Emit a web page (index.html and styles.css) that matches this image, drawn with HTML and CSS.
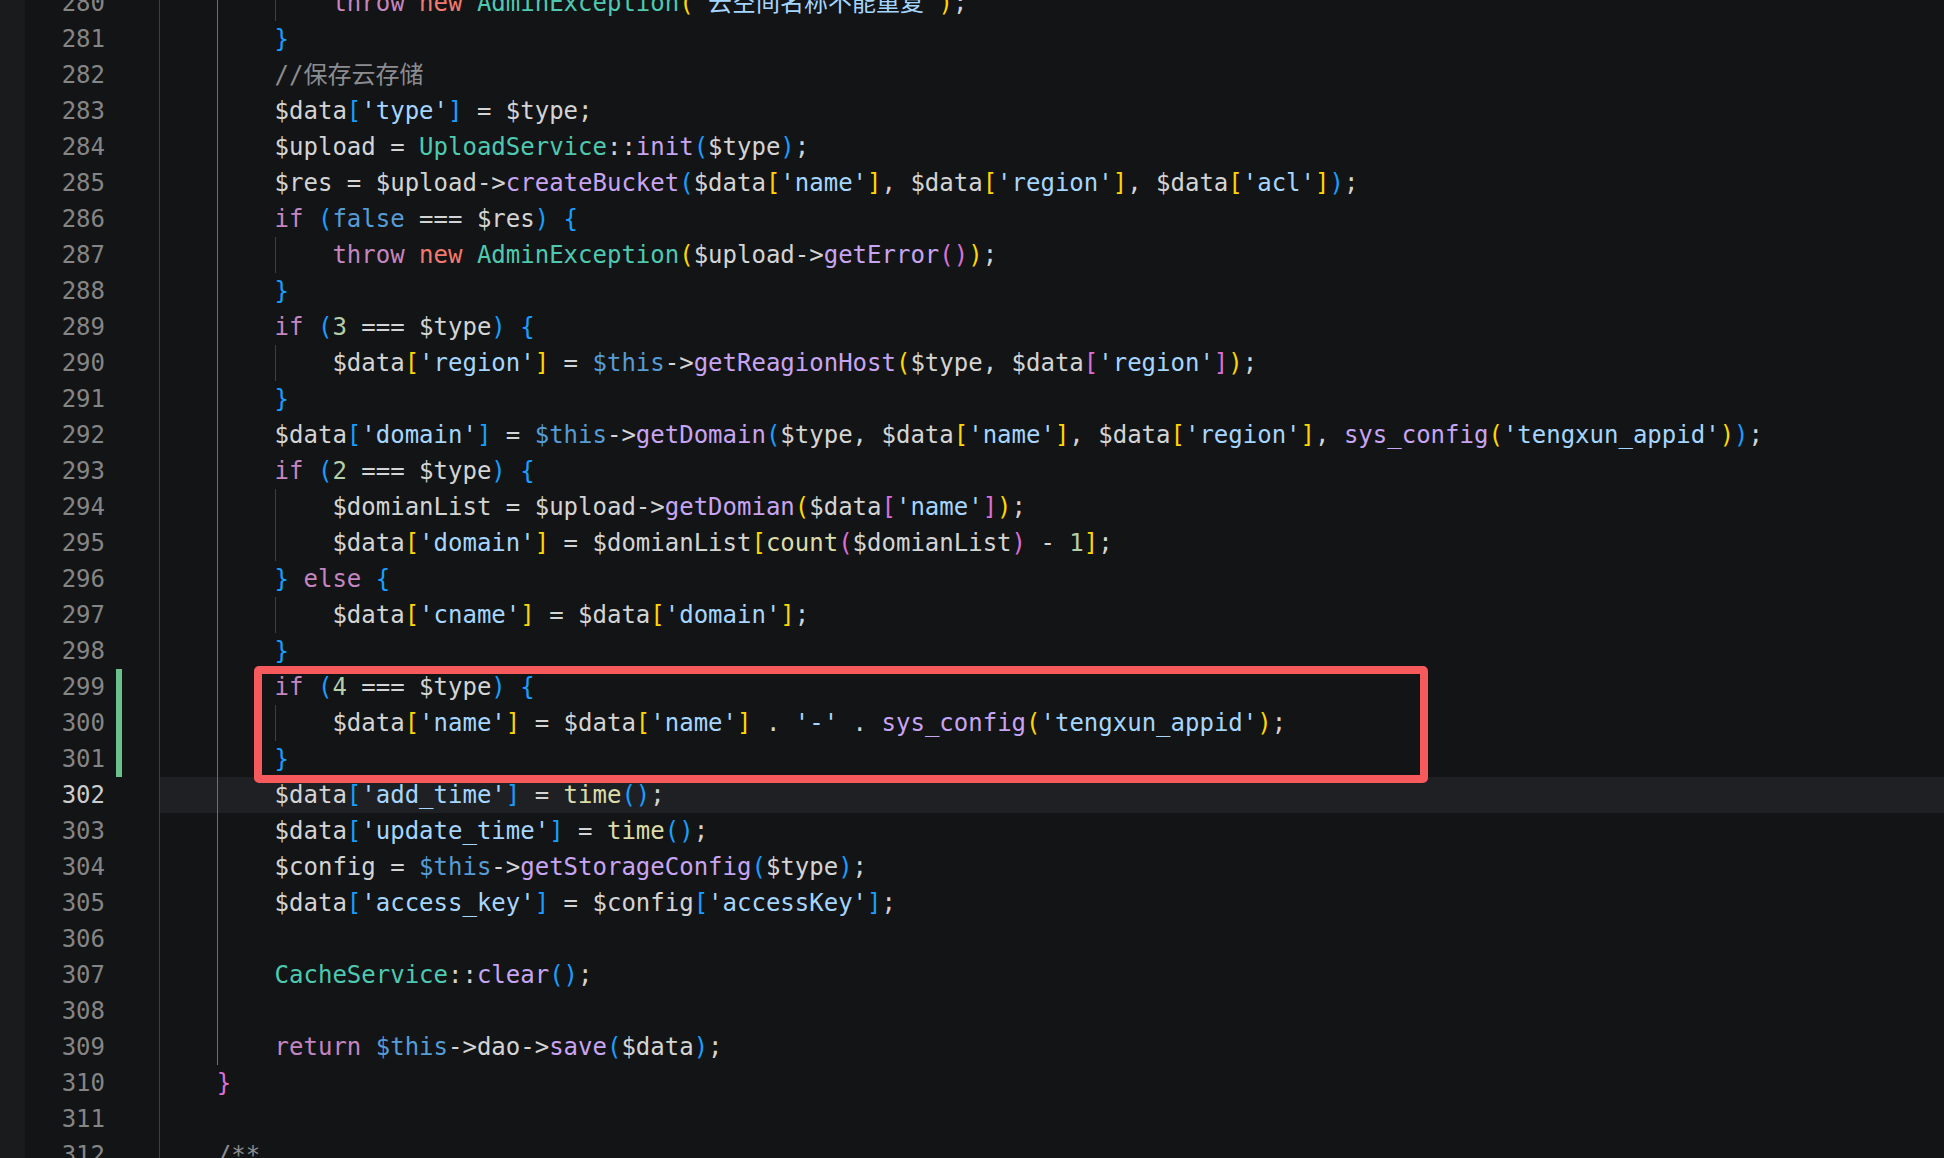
FILE: index.html
```html
<!DOCTYPE html>
<html lang="zh-CN">
<head>
<meta charset="utf-8">
<title>editor</title>
<link rel="stylesheet" href="styles.css">
</head>
<body>
<div class="editor">
  <div class="strip"></div>
  <div class="lines">
    <div class="row"><span class="ln">280</span><span class="mk"></span><div class="code"><span class="g"></span><span class="g ga"></span><span class="g"></span><span class="k">throw</span> <span class="n">new</span> <span class="c">AdminException</span><span class="y">(</span><span class="s">'云空间名称不能重复'</span><span class="y">)</span>;</div></div>
    <div class="row"><span class="ln">281</span><span class="mk"></span><div class="code"><span class="g"></span><span class="g ga"></span><span class="bl">}</span></div></div>
    <div class="row"><span class="ln">282</span><span class="mk"></span><div class="code"><span class="g"></span><span class="g ga"></span><span class="cm">//保存云存储</span></div></div>
    <div class="row"><span class="ln">283</span><span class="mk"></span><div class="code"><span class="g"></span><span class="g ga"></span>$data<span class="bl">[</span><span class="s">'type'</span><span class="bl">]</span> = $type;</div></div>
    <div class="row"><span class="ln">284</span><span class="mk"></span><div class="code"><span class="g"></span><span class="g ga"></span>$upload = <span class="c">UploadService</span>::<span class="f">init</span><span class="bl">(</span>$type<span class="bl">)</span>;</div></div>
    <div class="row"><span class="ln">285</span><span class="mk"></span><div class="code"><span class="g"></span><span class="g ga"></span>$res = $upload-&gt;<span class="f">createBucket</span><span class="bl">(</span>$data<span class="y">[</span><span class="s">'name'</span><span class="y">]</span>, $data<span class="y">[</span><span class="s">'region'</span><span class="y">]</span>, $data<span class="y">[</span><span class="s">'acl'</span><span class="y">]</span><span class="bl">)</span>;</div></div>
    <div class="row"><span class="ln">286</span><span class="mk"></span><div class="code"><span class="g"></span><span class="g ga"></span><span class="k">if</span> <span class="bl">(</span><span class="t">false</span> === $res<span class="bl">)</span> <span class="bl">{</span></div></div>
    <div class="row"><span class="ln">287</span><span class="mk"></span><div class="code"><span class="g"></span><span class="g ga"></span><span class="g"></span><span class="k">throw</span> <span class="n">new</span> <span class="c">AdminException</span><span class="y">(</span>$upload-&gt;<span class="f">getError</span><span class="p">()</span><span class="y">)</span>;</div></div>
    <div class="row"><span class="ln">288</span><span class="mk"></span><div class="code"><span class="g"></span><span class="g ga"></span><span class="bl">}</span></div></div>
    <div class="row"><span class="ln">289</span><span class="mk"></span><div class="code"><span class="g"></span><span class="g ga"></span><span class="k">if</span> <span class="bl">(</span><span class="num">3</span> === $type<span class="bl">)</span> <span class="bl">{</span></div></div>
    <div class="row"><span class="ln">290</span><span class="mk"></span><div class="code"><span class="g"></span><span class="g ga"></span><span class="g"></span>$data<span class="y">[</span><span class="s">'region'</span><span class="y">]</span> = <span class="t">$this</span>-&gt;<span class="f">getReagionHost</span><span class="y">(</span>$type, $data<span class="p">[</span><span class="s">'region'</span><span class="p">]</span><span class="y">)</span>;</div></div>
    <div class="row"><span class="ln">291</span><span class="mk"></span><div class="code"><span class="g"></span><span class="g ga"></span><span class="bl">}</span></div></div>
    <div class="row"><span class="ln">292</span><span class="mk"></span><div class="code"><span class="g"></span><span class="g ga"></span>$data<span class="bl">[</span><span class="s">'domain'</span><span class="bl">]</span> = <span class="t">$this</span>-&gt;<span class="f">getDomain</span><span class="bl">(</span>$type, $data<span class="y">[</span><span class="s">'name'</span><span class="y">]</span>, $data<span class="y">[</span><span class="s">'region'</span><span class="y">]</span>, <span class="f">sys_config</span><span class="y">(</span><span class="s">'tengxun_appid'</span><span class="y">)</span><span class="bl">)</span>;</div></div>
    <div class="row"><span class="ln">293</span><span class="mk"></span><div class="code"><span class="g"></span><span class="g ga"></span><span class="k">if</span> <span class="bl">(</span><span class="num">2</span> === $type<span class="bl">)</span> <span class="bl">{</span></div></div>
    <div class="row"><span class="ln">294</span><span class="mk"></span><div class="code"><span class="g"></span><span class="g ga"></span><span class="g"></span>$domianList = $upload-&gt;<span class="f">getDomian</span><span class="y">(</span>$data<span class="p">[</span><span class="s">'name'</span><span class="p">]</span><span class="y">)</span>;</div></div>
    <div class="row"><span class="ln">295</span><span class="mk"></span><div class="code"><span class="g"></span><span class="g ga"></span><span class="g"></span>$data<span class="y">[</span><span class="s">'domain'</span><span class="y">]</span> = $domianList<span class="y">[</span><span class="b">count</span><span class="p">(</span>$domianList<span class="p">)</span> - <span class="num">1</span><span class="y">]</span>;</div></div>
    <div class="row"><span class="ln">296</span><span class="mk"></span><div class="code"><span class="g"></span><span class="g ga"></span><span class="bl">}</span> <span class="k">else</span> <span class="bl">{</span></div></div>
    <div class="row"><span class="ln">297</span><span class="mk"></span><div class="code"><span class="g"></span><span class="g ga"></span><span class="g"></span>$data<span class="y">[</span><span class="s">'cname'</span><span class="y">]</span> = $data<span class="y">[</span><span class="s">'domain'</span><span class="y">]</span>;</div></div>
    <div class="row"><span class="ln">298</span><span class="mk"></span><div class="code"><span class="g"></span><span class="g ga"></span><span class="bl">}</span></div></div>
    <div class="row"><span class="ln">299</span><span class="mk"><span class="add"></span></span><div class="code"><span class="g"></span><span class="g ga"></span><span class="k">if</span> <span class="bl">(</span><span class="num">4</span> === $type<span class="bl">)</span> <span class="bl">{</span></div></div>
    <div class="row"><span class="ln">300</span><span class="mk"><span class="add"></span></span><div class="code"><span class="g"></span><span class="g ga"></span><span class="g"></span>$data<span class="y">[</span><span class="s">'name'</span><span class="y">]</span> = $data<span class="y">[</span><span class="s">'name'</span><span class="y">]</span> . <span class="s">'-'</span> . <span class="f">sys_config</span><span class="y">(</span><span class="s">'tengxun_appid'</span><span class="y">)</span>;</div></div>
    <div class="row"><span class="ln">301</span><span class="mk"><span class="add"></span></span><div class="code"><span class="g"></span><span class="g ga"></span><span class="bl">}</span></div></div>
    <div class="row cur"><span class="ln">302</span><span class="mk"></span><div class="code"><span class="g"></span><span class="g ga"></span>$data<span class="bl">[</span><span class="s">'add_time'</span><span class="bl">]</span> = <span class="b">time</span><span class="bl">()</span>;</div></div>
    <div class="row"><span class="ln">303</span><span class="mk"></span><div class="code"><span class="g"></span><span class="g ga"></span>$data<span class="bl">[</span><span class="s">'update_time'</span><span class="bl">]</span> = <span class="b">time</span><span class="bl">()</span>;</div></div>
    <div class="row"><span class="ln">304</span><span class="mk"></span><div class="code"><span class="g"></span><span class="g ga"></span>$config = <span class="t">$this</span>-&gt;<span class="f">getStorageConfig</span><span class="bl">(</span>$type<span class="bl">)</span>;</div></div>
    <div class="row"><span class="ln">305</span><span class="mk"></span><div class="code"><span class="g"></span><span class="g ga"></span>$data<span class="bl">[</span><span class="s">'access_key'</span><span class="bl">]</span> = $config<span class="bl">[</span><span class="s">'accessKey'</span><span class="bl">]</span>;</div></div>
    <div class="row"><span class="ln">306</span><span class="mk"></span><div class="code"><span class="g"></span><span class="g ga"></span></div></div>
    <div class="row"><span class="ln">307</span><span class="mk"></span><div class="code"><span class="g"></span><span class="g ga"></span><span class="c">CacheService</span>::<span class="f">clear</span><span class="bl">()</span>;</div></div>
    <div class="row"><span class="ln">308</span><span class="mk"></span><div class="code"><span class="g"></span><span class="g ga"></span></div></div>
    <div class="row"><span class="ln">309</span><span class="mk"></span><div class="code"><span class="g"></span><span class="g ga"></span><span class="k">return</span> <span class="t">$this</span>-&gt;dao-&gt;<span class="f">save</span><span class="bl">(</span>$data<span class="bl">)</span>;</div></div>
    <div class="row"><span class="ln">310</span><span class="mk"></span><div class="code"><span class="g"></span><span class="p">}</span></div></div>
    <div class="row"><span class="ln">311</span><span class="mk"></span><div class="code"><span class="g"></span></div></div>
    <div class="row"><span class="ln">312</span><span class="mk"></span><div class="code"><span class="g"></span><span class="cm">/**</span></div></div>
  </div>
  <div class="mark"></div>
</div>
</body>
</html>
```

FILE: styles.css
```css
html, body {
  margin: 0;
  padding: 0;
  background: #131416;
  overflow: hidden;
}

.editor {
  position: relative;
  display: flex;
  width: 1944px;
  height: 1158px;
  overflow: hidden;
  font-family: "DejaVu Sans Mono", "Noto Sans CJK SC", monospace;
  font-size: 24px;
  color: #d4d4d4;
}

.strip {
  width: 25px;
  flex: none;
  background: #1a1b1d;
}

.lines {
  flex: 1;
  margin-top: -15px;
}

.row {
  display: flex;
  height: 36px;
  line-height: 36px;
}

.ln {
  width: 80px;
  flex: none;
  text-align: right;
  color: #858585;
}

.cur .ln {
  color: #cccccc;
}

.mk {
  width: 54px;
  flex: none;
  display: flex;
}

.add {
  width: 6px;
  margin-left: 11px;
  background: #6cc08b;
}

.code {
  flex: 1;
  white-space: pre;
}

.cur .code {
  background: #1f2023;
}

.g {
  display: inline-block;
  box-sizing: border-box;
  width: 4ch;
  height: 36px;
  vertical-align: top;
  border-left: 1px solid #3e3f42;
}

.g.ga {
  border-left-color: #6e6f72;
}

.k { color: #c586c0; }
.n { color: #f47a6e; }
.c { color: #4ec9b0; }
.f { color: #c8a5f3; }
.b { color: #dcdcaa; }
.s { color: #a5d6ff; }
.num { color: #b5cea8; }
.t { color: #569cd6; }
.cm { color: #8b8d91; }
.y { color: #ffd700; }
.p { color: #da70d6; }
.bl { color: #179fff; }

.mark {
  position: absolute;
  left: 254px;
  top: 666px;
  width: 1174px;
  height: 117px;
  box-sizing: border-box;
  border: 8px solid #f65a5d;
  border-radius: 5px;
}
```
